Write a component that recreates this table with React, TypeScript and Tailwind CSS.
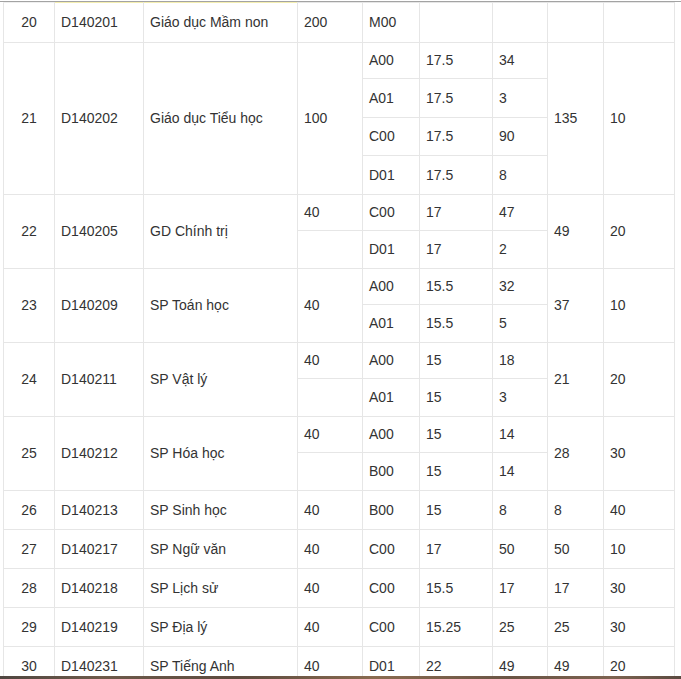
import React from "react";

type Sub = { block: string; score: string; count: string; h: string };

type Group = {
  stt: string;
  code: string;
  name: string;
  quota: string;
  spanQuota: boolean;
  total: string;
  extra: string;
  subs: Sub[];
};

const groups: Group[] = [
  {
    stt: "20",
    code: "D140201",
    name: "Giáo dục Mầm non",
    quota: "200",
    spanQuota: true,
    total: "",
    extra: "",
    subs: [{ block: "M00", score: "", count: "", h: "h-[40px]" }],
  },
  {
    stt: "21",
    code: "D140202",
    name: "Giáo dục Tiểu học",
    quota: "100",
    spanQuota: true,
    total: "135",
    extra: "10",
    subs: [
      { block: "A00", score: "17.5", count: "34", h: "h-[36px]" },
      { block: "A01", score: "17.5", count: "3", h: "h-[39px]" },
      { block: "C00", score: "17.5", count: "90", h: "h-[38px]" },
      { block: "D01", score: "17.5", count: "8", h: "h-[39px]" },
    ],
  },
  {
    stt: "22",
    code: "D140205",
    name: "GD Chính trị",
    quota: "40",
    spanQuota: false,
    total: "49",
    extra: "20",
    subs: [
      { block: "C00", score: "17", count: "47", h: "h-[36px]" },
      { block: "D01", score: "17", count: "2", h: "h-[38px]" },
    ],
  },
  {
    stt: "23",
    code: "D140209",
    name: "SP Toán học",
    quota: "40",
    spanQuota: true,
    total: "37",
    extra: "10",
    subs: [
      { block: "A00", score: "15.5", count: "32", h: "h-[36px]" },
      { block: "A01", score: "15.5", count: "5", h: "h-[38px]" },
    ],
  },
  {
    stt: "24",
    code: "D140211",
    name: "SP Vật lý",
    quota: "40",
    spanQuota: false,
    total: "21",
    extra: "20",
    subs: [
      { block: "A00", score: "15", count: "18", h: "h-[36px]" },
      { block: "A01", score: "15", count: "3", h: "h-[38px]" },
    ],
  },
  {
    stt: "25",
    code: "D140212",
    name: "SP Hóa học",
    quota: "40",
    spanQuota: false,
    total: "28",
    extra: "30",
    subs: [
      { block: "A00", score: "15", count: "14", h: "h-[36px]" },
      { block: "B00", score: "15", count: "14", h: "h-[38px]" },
    ],
  },
  {
    stt: "26",
    code: "D140213",
    name: "SP Sinh học",
    quota: "40",
    spanQuota: true,
    total: "8",
    extra: "40",
    subs: [{ block: "B00", score: "15", count: "8", h: "h-[39px]" }],
  },
  {
    stt: "27",
    code: "D140217",
    name: "SP Ngữ văn",
    quota: "40",
    spanQuota: true,
    total: "50",
    extra: "10",
    subs: [{ block: "C00", score: "17", count: "50", h: "h-[39px]" }],
  },
  {
    stt: "28",
    code: "D140218",
    name: "SP Lịch sử",
    quota: "40",
    spanQuota: true,
    total: "17",
    extra: "30",
    subs: [{ block: "C00", score: "15.5", count: "17", h: "h-[39px]" }],
  },
  {
    stt: "29",
    code: "D140219",
    name: "SP Địa lý",
    quota: "40",
    spanQuota: true,
    total: "25",
    extra: "30",
    subs: [{ block: "C00", score: "15.25", count: "25", h: "h-[39px]" }],
  },
  {
    stt: "30",
    code: "D140231",
    name: "SP Tiếng Anh",
    quota: "40",
    spanQuota: true,
    total: "49",
    extra: "20",
    subs: [{ block: "D01", score: "22", count: "49", h: "h-[39px]" }],
  },
];

const cell = "border border-[#e6e6e6] px-[6px] py-0 align-middle text-left";

export default function App() {
  return (
    <div className="w-[681px] h-[679px] bg-white flex flex-col overflow-hidden text-[14px] text-[#333] font-['Liberation_Sans',Arial,sans-serif]">
      <div className="h-px mt-px bg-[#a3a3a3]" />
      <div className="flex-1 overflow-hidden pl-[3px]">
        <table className="table-fixed border-collapse w-[672px]">
          <colgroup>
            <col className="w-[51px]" />
            <col className="w-[89px]" />
            <col className="w-[154px]" />
            <col className="w-[65px]" />
            <col className="w-[57px]" />
            <col className="w-[73px]" />
            <col className="w-[55px]" />
            <col className="w-[56px]" />
            <col className="w-[71px]" />
          </colgroup>
          <tbody>
            {groups.map((g, gi) =>
              g.subs.map((s, si) => {
                const first = si === 0;
                const span = g.subs.length;
                const top = gi === 0 ? "border-t-[#f4eeb0]" : "";
                return (
                  <tr key={g.stt + s.block + si} className={s.h}>
                    {first && (
                      <td rowSpan={span} className={`${cell} text-center! ${gi === 0 ? "border-t-[#efefef]" : ""}`}>
                        {g.stt}
                      </td>
                    )}
                    {first && (
                      <td rowSpan={span} className={`${cell} ${top}`}>
                        {g.code}
                      </td>
                    )}
                    {first && (
                      <td rowSpan={span} className={`${cell} ${top}`}>
                        {g.name}
                      </td>
                    )}
                    {g.spanQuota
                      ? first && (
                          <td rowSpan={span} className={cell}>
                            {g.quota}
                          </td>
                        )
                      : (
                          <td className={cell}>{first ? g.quota : ""}</td>
                        )}
                    <td className={cell}>{s.block}</td>
                    <td className={cell}>{s.score}</td>
                    <td className={cell}>{s.count}</td>
                    {first && (
                      <td rowSpan={span} className={cell}>
                        {g.total}
                      </td>
                    )}
                    {first && (
                      <td rowSpan={span} className={cell}>
                        {g.extra}
                      </td>
                    )}
                  </tr>
                );
              })
            )}
          </tbody>
        </table>
      </div>
      <div className="h-[3px] bg-[linear-gradient(to_right,#4f4640,#6e5a4a_15%,#5c4a3e_35%,#8a6b50_55%,#6a5444_75%,#7d6350_90%,#5a4a40)]" />
    </div>
  );
}
